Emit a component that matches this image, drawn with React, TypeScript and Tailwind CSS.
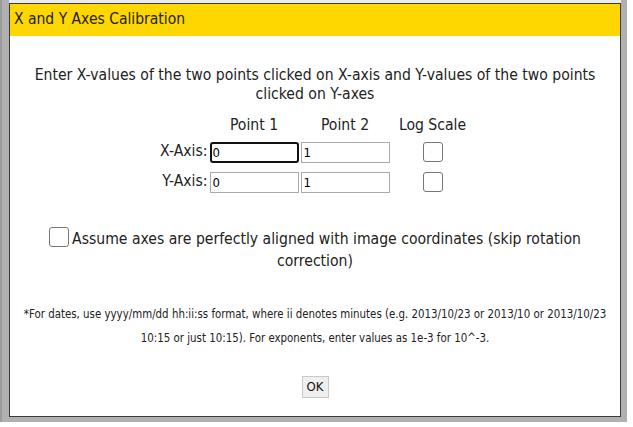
import React from 'react'

const font = { fontFamily: '"DejaVu Sans Condensed", "DejaVu Sans", sans-serif' }

function AxisRow({ label, focused }: { label: string; focused?: boolean }) {
    return (
        <div className="flex items-center h-[30px]">
            <div className="w-[52px] text-right text-[15.6px] text-[#222] pr-[2px]">{label}</div>
            <input
                defaultValue="0"
                className={focused
                    ? 'w-[89px] h-[21px] border-2 border-[#111] rounded-[3px] px-[1px] text-[13px] text-black outline-none'
                    : 'w-[89px] h-[21px] border border-[#a9a9a9] px-[2px] text-[13px] text-black outline-none'}
            />
            <input
                defaultValue="1"
                className="ml-[2px] w-[89px] h-[21px] border border-[#a9a9a9] px-[2px] text-[13px] text-black outline-none"
            />
            <div className="w-[83px] flex justify-center pl-[3px]">
                <input type="checkbox" className="appearance-none w-[20px] h-[20px] border border-[#767676] rounded-[3px] bg-white" />
            </div>
        </div>
    )
}

export default function App() {
    return (
        <div className="w-[633px] h-[427px] bg-white overflow-hidden" style={font}>
            <div className="w-[627px] h-[422px] bg-[#b0b0b0] flex">
                <div className="w-[9px] h-full border-l-2 border-[#9a9a9a]"></div>
                <div className="flex flex-col">
                    <div className="h-[3px] w-[612px] bg-[#ececec]"></div>
                    <div id="dialog" className="w-[612px] h-[414px] bg-white border border-[#3a3a3a] flex flex-col">
                        <div className="h-[32px] bg-[#ffd700] flex items-center pl-[4px] text-[15.5px] text-[#222]">
                            X and Y Axes Calibration
                        </div>
                        <div className="flex flex-col items-center text-[#222]">
                            <p className="mt-[30px] text-[15.6px] leading-[19px] text-center px-[14px]">
                                Enter X-values of the two points clicked on X-axis and Y-values of the two points clicked on Y-axes
                            </p>
                            <div className="mt-[12px] flex flex-col">
                                <div className="flex items-center h-[19px] text-[15.6px]">
                                    <div className="w-[52px]"></div>
                                    <div className="w-[89px] text-center">Point 1</div>
                                    <div className="ml-[2px] w-[89px] text-center">Point 2</div>
                                    <div className="w-[83px] text-center pl-[3px]">Log Scale</div>
                                </div>
                                <div className="h-[2px]"></div>
                                <AxisRow label="X-Axis:" focused />
                                <AxisRow label="Y-Axis:" />
                            </div>
                            <div className="mt-[30px] px-[36px] text-center text-[15.6px] leading-[22px]">
                                <input type="checkbox" className="appearance-none align-[-3px] mr-[3px] w-[20px] h-[20px] border border-[#767676] rounded-[3px] bg-white" />
                                Assume axes are perfectly aligned with image coordinates (skip rotation correction)
                            </div>
                            <p className="mt-[30px] px-[10px] text-center text-[11.4px] leading-[24px]">
                                *For dates, use yyyy/mm/dd hh:ii:ss format, where ii denotes minutes (e.g. 2013/10/23 or 2013/10 or 2013/10/23 10:15 or just 10:15). For exponents, enter values as 1e-3 for 10^-3.
                            </p>
                            <button className="mt-[26px] w-[27px] h-[22px] bg-[#efefef] border border-[#c8c8c8] text-[13px] text-[#111] flex items-center justify-center">
                                OK
                            </button>
                        </div>
                    </div>
                </div>
            </div>
        </div>
    )
}
